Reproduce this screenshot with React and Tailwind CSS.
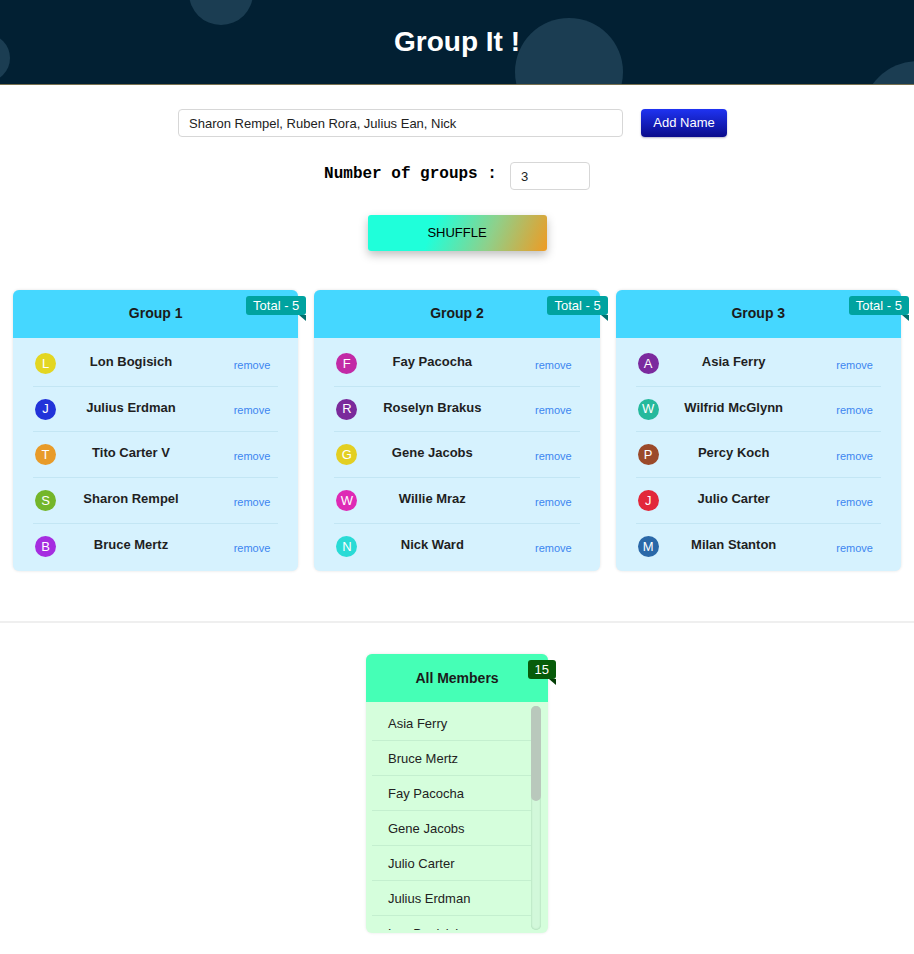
import React, { useState } from "react";

const groups = [
  {
    title: "Group 1",
    members: [
      { name: "Lon Bogisich", color: "bg-[#e3d622]" },
      { name: "Julius Erdman", color: "bg-[#2233d9]" },
      { name: "Tito Carter V", color: "bg-[#e89b29]" },
      { name: "Sharon Rempel", color: "bg-[#74b62a]" },
      { name: "Bruce Mertz", color: "bg-[#a52de0]" },
    ],
  },
  {
    title: "Group 2",
    members: [
      { name: "Fay Pacocha", color: "bg-[#c22aa6]" },
      { name: "Roselyn Brakus", color: "bg-[#7a2a9b]" },
      { name: "Gene Jacobs", color: "bg-[#e3cf22]" },
      { name: "Willie Mraz", color: "bg-[#de2ab5]" },
      { name: "Nick Ward", color: "bg-[#2adbd6]" },
    ],
  },
  {
    title: "Group 3",
    members: [
      { name: "Asia Ferry", color: "bg-[#7b2a9e]" },
      { name: "Wilfrid McGlynn", color: "bg-[#25b99c]" },
      { name: "Percy Koch", color: "bg-[#9b4a2a]" },
      { name: "Julio Carter", color: "bg-[#e2283a]" },
      { name: "Milan Stanton", color: "bg-[#2a68a8]" },
    ],
  },
];

const allMembers = [
  "Asia Ferry",
  "Bruce Mertz",
  "Fay Pacocha",
  "Gene Jacobs",
  "Julio Carter",
  "Julius Erdman",
  "Lon Bogisich",
  "Milan Stanton",
  "Nick Ward",
  "Percy Koch",
  "Roselyn Brakus",
  "Sharon Rempel",
  "Tito Carter V",
  "Wilfrid McGlynn",
  "Willie Mraz",
];

const Badge = ({ children, bg, fold }) => (
  <div className="absolute top-[6px] right-[-8px]">
    <div className={`${bg} text-white text-[13px] leading-[19px] px-[7px] rounded-[3px]`}>
      {children}
    </div>
    <div className={`ml-auto w-0 h-0 border-l-[7px] border-l-transparent border-t-[6px] ${fold}`}></div>
  </div>
);

const GroupCard = ({ group }) => {
  return (
    <div className="relative rounded-[6px] bg-[#d6f2fe] shadow-[0_0_3px_rgba(0,0,0,0.12)]">
      <div className="h-12 rounded-t-[6px] bg-[#45d7ff] flex items-center justify-center">
        <h2 className="text-[14px] font-bold text-[#1b1b1b] -mt-[2px]">{group.title}</h2>
      </div>
      <Badge bg="bg-[#00a3a0]" fold="border-t-[#00706e]">
        Total - {group.members.length}
      </Badge>
      <ul className="px-5 pt-[3px] pb-[2px]">
        {group.members.map((m, i) => (
          <li
            key={m.name}
            className={`h-[45.7px] flex items-center ${
              i < group.members.length - 1 ? "border-b border-[#c3e6f4]" : ""
            }`}
          >
            <span
              className={`ml-[2px] w-[21px] h-[21px] rounded-full ${m.color} text-white text-[13px] flex items-center justify-center`}
            >
              {m.name[0]}
            </span>
            <span className="w-[150px] text-center text-[13px] font-bold text-[#1f1f1f] -mt-[3px]">
              {m.name}
            </span>
            <button className="ml-auto mr-2 mt-[3px] text-[11px] text-[#3d86f0]">remove</button>
          </li>
        ))}
      </ul>
    </div>
  );
};

const App = () => {
  const [names, setNames] = useState("Sharon Rempel, Ruben Rora, Julius Ean, Nick");
  const [count, setCount] = useState("3");

  return (
    <div className="min-h-[954px] bg-white font-['Liberation_Sans',Arial,sans-serif] text-[#222]">
      {/* Header */}
      <header className="relative h-[85px] overflow-hidden bg-[#022033] border-b border-[#77704f] flex items-center justify-center">
        <div className="absolute left-[189px] top-[-39px] w-16 h-16 rounded-full bg-[#1b3d52]"></div>
        <div className="absolute left-[-38px] top-[34px] w-12 h-12 rounded-full bg-[#1b3d52]"></div>
        <div className="absolute left-[515px] top-[18px] w-[108px] h-[108px] rounded-full bg-[#1b3d52]"></div>
        <div className="absolute left-[862px] top-[61px] w-[112px] h-[112px] rounded-full bg-[#1b3d52]"></div>
        <h1 className="relative text-[28px] font-bold text-white">Group It !</h1>
      </header>

      {/* Controls */}
      <div className="pt-6 flex flex-col items-center">
        <div className="flex items-center gap-[18px] pr-[9px]">
          <input
            value={names}
            onChange={(e) => setNames(e.target.value)}
            className="w-[445px] h-[28px] px-[10px] text-[13px] text-[#222] border border-[#d7d7d7] rounded-[4px] outline-none"
          />
          <button className="w-[86px] h-[28px] rounded-[4px] bg-linear-to-b from-[#1f33f2] to-[#0a0a8c] text-white text-[13px] shadow-[0_1px_2px_rgba(0,0,80,0.3)]">
            Add Name
          </button>
        </div>

        <div className="mt-[25px] flex items-center gap-[13px]">
          <label className="font-['Liberation_Mono',monospace] font-bold text-[16px] text-black -mt-[5px]">
            Number of groups :
          </label>
          <input
            value={count}
            onChange={(e) => setCount(e.target.value)}
            className="w-[80px] h-[28px] px-[10px] text-[13px] border border-[#d7d7d7] rounded-[4px] outline-none"
          />
        </div>

        <button className="mt-[25px] w-[179px] h-[36px] rounded-[3px] bg-[linear-gradient(112deg,#1fffda_36%,#8fd08a_68%,#ee9b24)] text-[13px] text-black shadow-[0_4px_10px_rgba(0,0,0,0.25)]">
          SHUFFLE
        </button>
      </div>

      {/* Groups */}
      <div className="mt-[39px] px-[13px] grid grid-cols-3 gap-4">
        {groups.map((g) => (
          <GroupCard key={g.title} group={g} />
        ))}
      </div>

      <div className="mt-[50px] h-[2px] bg-[#efefef]"></div>

      {/* All members */}
      <div className="mt-[31px] flex justify-center pb-5">
        <div className="relative w-[182px] rounded-[6px] bg-[#d5fedc] shadow-[0_0_3px_rgba(0,0,0,0.1)]">
          <div className="h-12 rounded-t-[6px] bg-[#45ffb6] flex items-center justify-center">
            <h2 className="text-[14px] font-bold text-[#1b1b1b]">All Members</h2>
          </div>
          <Badge bg="bg-[#075c0a]" fold="border-t-[#033d05]">
            15
          </Badge>
          <div className="mt-[4px] ml-[6px] mr-[7px] mb-[3px] h-[224px] flex">
            <ul className="flex-1 overflow-hidden">
              {allMembers.map((n) => (
                <li
                  key={n}
                  className="h-[35px] shrink-0 flex items-center pl-4 text-[13px] text-[#222] border-b border-[#c4efcf]"
                >
                  {n}
                </li>
              ))}
            </ul>
            {/* scrollbar */}
            <div className="w-[10px] rounded-full bg-[#d2f8da] shadow-[inset_0_0_2px_rgba(0,90,30,0.3)]">
              <div className="h-[95px] rounded-full bg-[#b9c8bc]"></div>
            </div>
          </div>
        </div>
      </div>
    </div>
  );
};

export default App;
